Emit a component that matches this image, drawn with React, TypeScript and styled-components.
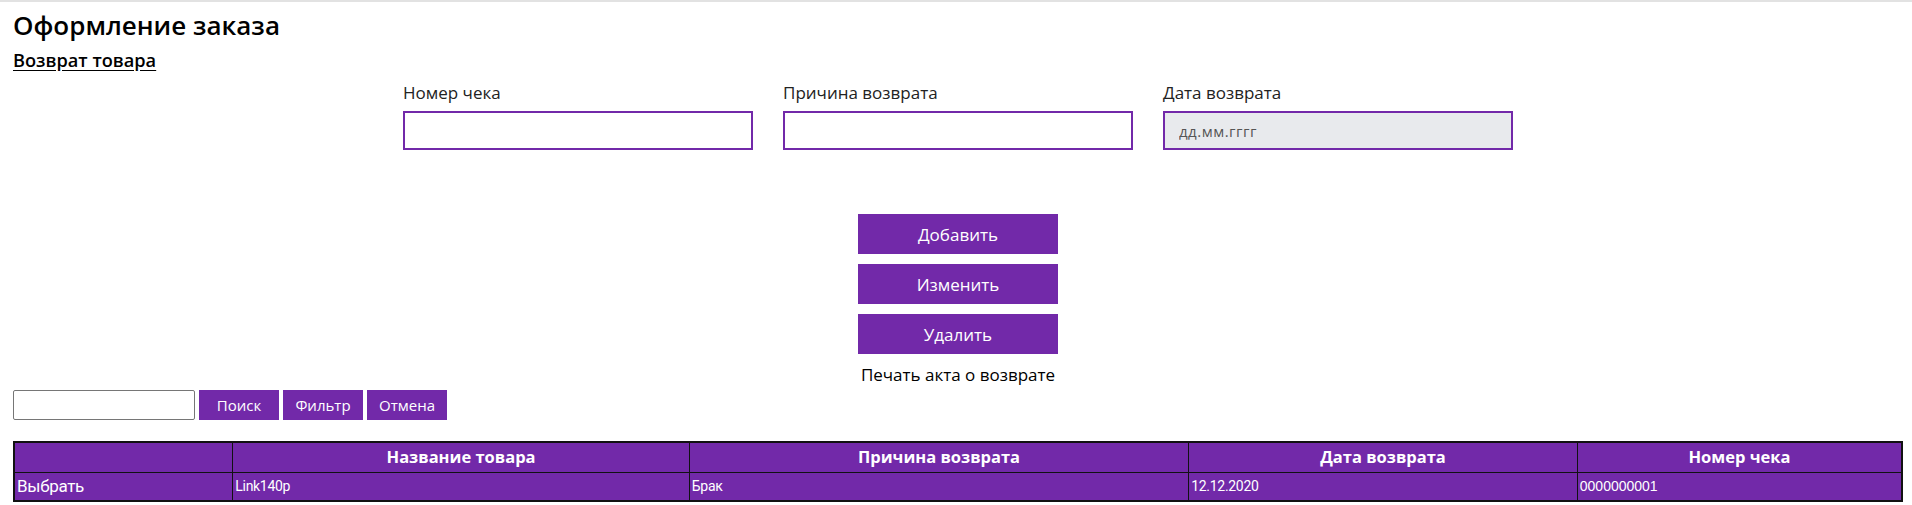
import React from "react";
import styled, { createGlobalStyle } from "styled-components";

const PURPLE = "#7229a9";

const Global = createGlobalStyle`
  html, body { margin: 0; padding: 0; background: #fff; }
  body { font-family: "Open Sans", "Noto Sans", sans-serif; color: #000; }
  * { box-sizing: border-box; }
`;

const Page = styled.div`
  border-top: 2px solid #e2e2e2;
  padding: 0 9px 0 13px;
  display: flex;
  flex-direction: column;
`;

const Title = styled.h1`
  margin: 6px 0 0 0;
  font-size: 26px;
  font-weight: 600;
  line-height: 34px;
`;

const SubLink = styled.a`
  align-self: flex-start;
  margin-top: 7px;
  font-size: 18.2px;
  font-weight: 600;
  line-height: 22px;
  color: #000;
  text-decoration: underline;
  text-underline-offset: 3px;
`;

const FormRow = styled.div`
  display: flex;
  justify-content: center;
  gap: 30px;
  margin-top: 10px;
`;

const Field = styled.label`
  display: flex;
  flex-direction: column;
  width: 350px;
`;

const FieldLabel = styled.span`
  font-size: 17px;
  line-height: 24px;
  color: #222;
  margin-bottom: 6px;
`;

const TextInput = styled.input<{ $date?: boolean }>`
  height: 39px;
  width: 350px;
  border: 2px solid ${PURPLE};
  background: ${(p) => (p.$date ? "#e8eaed" : "#fff")};
  padding: 0 14px;
  font-family: "Open Sans", sans-serif;
  font-size: 15px;
  color: #555;
  outline: none;
  &::placeholder { color: #555; letter-spacing: 0.5px; }
`;

const ButtonStack = styled.div`
  display: flex;
  flex-direction: column;
  align-items: center;
  gap: 10px;
  margin-top: 64px;
`;

const BigButton = styled.button`
  width: 200px;
  height: 40px;
  border: none;
  background: ${PURPLE};
  color: #fff;
  font-family: "Open Sans", sans-serif;
  font-size: 17px;
  cursor: pointer;
`;

const PrintLabel = styled.div`
  font-size: 17px;
  line-height: 24px;
  margin-top: -1px;
`;

const SearchRow = styled.div`
  display: flex;
  align-items: center;
  gap: 4px;
  margin-top: 3px;
`;

const SearchInput = styled.input`
  width: 182px;
  height: 30px;
  border: 1px solid #767676;
  border-radius: 2px;
`;

const SmallButton = styled.button`
  width: 80px;
  height: 30px;
  border: none;
  background: ${PURPLE};
  color: #fff;
  font-family: "Open Sans", sans-serif;
  font-size: 15px;
  cursor: pointer;
`;

const Table = styled.table`
  margin-top: 21px;
  width: 100%;
  border-collapse: collapse;
  background: ${PURPLE};
  color: #fff;
  border: 2px solid #111;
`;

const Th = styled.th<{ $w: number }>`
  width: ${(p) => p.$w}px;
  border: 1px solid #111;
  height: 30px;
  padding: 0 2px;
  font-family: "Open Sans", sans-serif;
  font-size: 16.5px;
  font-weight: 700;
  line-height: 20px;
  text-align: center;
`;

const Td = styled.td<{ $big?: boolean; $arial?: boolean }>`
  border: 1px solid #111;
  height: 29px;
  padding: 0 2px;
  line-height: 18px;
  font-family: ${(p) =>
    p.$arial ? '"Liberation Sans", Arial, sans-serif' : '"Liberation Sans Narrow", "Roboto", sans-serif'};
  font-size: ${(p) => (p.$big ? "17px" : "14px")};
  ${(p) => (p.$arial ? "" : "letter-spacing: -0.3px;")}
  text-align: left;
`;

export default function App() {
  return (
    <>
      <Global />
      <Page>
        <Title>Оформление заказа</Title>
        <SubLink href="#">Возврат товара</SubLink>
        <FormRow>
          <Field>
            <FieldLabel>Номер чека</FieldLabel>
            <TextInput type="text" />
          </Field>
          <Field>
            <FieldLabel>Причина возврата</FieldLabel>
            <TextInput type="text" />
          </Field>
          <Field>
            <FieldLabel>Дата возврата</FieldLabel>
            <TextInput type="text" $date placeholder="дд.мм.гггг" />
          </Field>
        </FormRow>
        <ButtonStack>
          <BigButton>Добавить</BigButton>
          <BigButton>Изменить</BigButton>
          <BigButton>Удалить</BigButton>
          <PrintLabel>Печать акта о возврате</PrintLabel>
        </ButtonStack>
        <SearchRow>
          <SearchInput type="text" />
          <SmallButton>Поиск</SmallButton>
          <SmallButton>Фильтр</SmallButton>
          <SmallButton>Отмена</SmallButton>
        </SearchRow>
        <Table>
          <thead>
            <tr>
              <Th $w={219}></Th>
              <Th $w={457}>Название товара</Th>
              <Th $w={500}>Причина возврата</Th>
              <Th $w={389}>Дата возврата</Th>
              <Th $w={325}>Номер чека</Th>
            </tr>
          </thead>
          <tbody>
            <tr>
              <Td $big>Выбрать</Td>
              <Td>Link140p</Td>
              <Td>Брак</Td>
              <Td>12.12.2020</Td>
              <Td $arial>0000000001</Td>
            </tr>
          </tbody>
        </Table>
      </Page>
    </>
  );
}
